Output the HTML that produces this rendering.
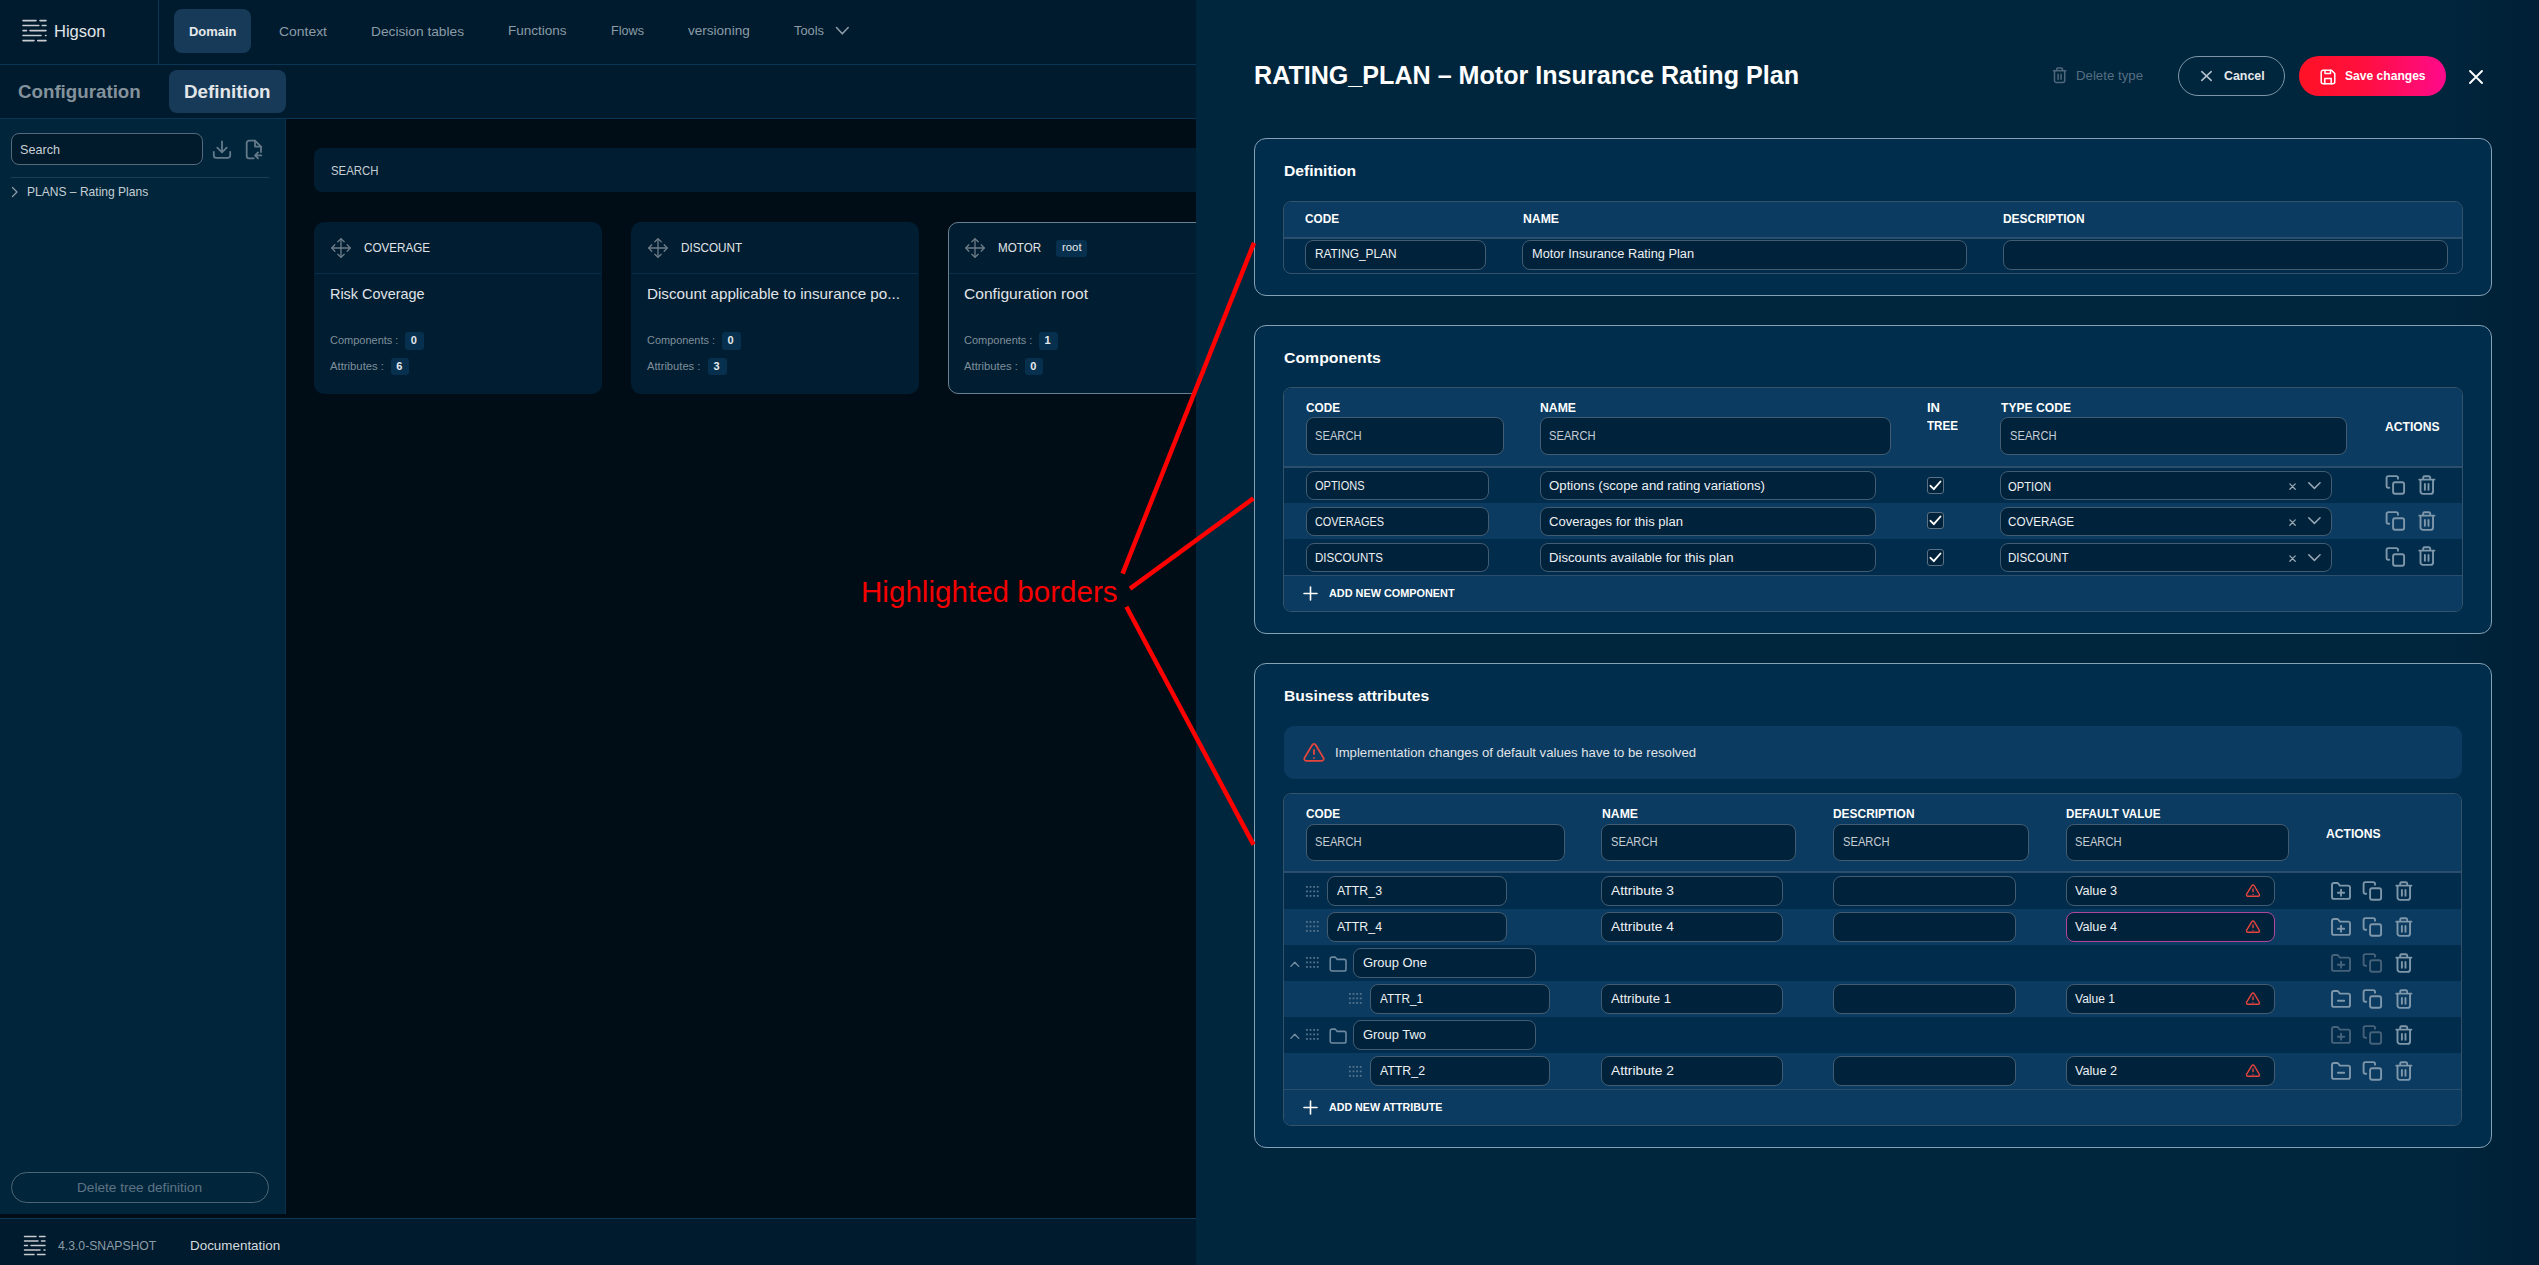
<!DOCTYPE html>
<html><head><meta charset="utf-8"><title>Higson</title>
<style>
html,body{margin:0;padding:0;}
body{width:2539px;height:1265px;overflow:hidden;position:relative;background:#000d17;font-family:"Liberation Sans", sans-serif;}
.a{position:absolute;}
.t{white-space:nowrap;}
svg.a{overflow:visible;}
</style></head><body>
<div class="a" style="left:0px;top:0px;width:1196px;height:1265px;background:#000d17;"></div>
<div class="a" style="left:0px;top:0px;width:1196px;height:64px;background:#001b2e;"></div>
<div class="a" style="left:0px;top:64px;width:1196px;height:1px;background:#0a3656;"></div>
<div class="a" style="left:158px;top:0px;width:1px;height:64px;background:#0a3656;"></div>
<svg class="a" style="left:22px;top:19px;" width="25" height="23" viewBox="0 0 25 23" fill="none" stroke="#c8ccd0" stroke-width="1.6" stroke-linecap="round" stroke-linejoin="round"><path d="M1 1.6H14M18 1.6H24"/><path d="M1 6.5H16.8M20.3 6.5H24"/><path d="M1 11.6H4.5M8 11.6H24"/><path d="M1 16.5H19M23.5 16.5H24"/><path d="M1 21.6H12M15.7 21.6H24"/></svg>
<div class="a t" id="t1" style="left:54.40px;top:24.06px;font-size:16px;line-height:16px;color:#e0e4e8;transform:scaleX(1.0339);transform-origin:0 0;">Higson</div>
<div class="a" style="left:174px;top:9px;width:77px;height:44px;background:#163a57;border-radius:8px;"></div>
<div class="a t" id="t2" style="left:188.50px;top:24.50px;font-size:13px;line-height:13px;color:#e6e9ec;font-weight:700;transform:scaleX(0.9964);transform-origin:0 0;">Domain</div>
<div class="a t" id="t3" style="left:279.40px;top:24.50px;font-size:13px;line-height:13px;color:#8c9ba7;transform:scaleX(1.0711);transform-origin:0 0;">Context</div>
<div class="a t" id="t4" style="left:371.00px;top:24.50px;font-size:13px;line-height:13px;color:#8c9ba7;transform:scaleX(1.0549);transform-origin:0 0;">Decision tables</div>
<div class="a t" id="t5" style="left:508.00px;top:24.30px;font-size:13px;line-height:13px;color:#8c9ba7;transform:scaleX(1.0395);transform-origin:0 0;">Functions</div>
<div class="a t" id="t6" style="left:610.80px;top:24.30px;font-size:13px;line-height:13px;color:#8c9ba7;transform:scaleX(0.9719);transform-origin:0 0;">Flows</div>
<div class="a t" id="t7" style="left:688.00px;top:24.30px;font-size:13px;line-height:13px;color:#8c9ba7;transform:scaleX(1.0411);transform-origin:0 0;">versioning</div>
<div class="a t" id="t8" style="left:794.00px;top:23.80px;font-size:13px;line-height:13px;color:#8c9ba7;transform:scaleX(0.9882);transform-origin:0 0;">Tools</div>
<svg class="a" style="left:835px;top:26px;" width="15" height="10" viewBox="0 0 15 10" fill="none" stroke="#8c9ba7" stroke-width="1.6" stroke-linecap="round" stroke-linejoin="round"><path d="M1.5 1.5L7.3 7.8L13.2 1.5"/></svg>
<div class="a" style="left:0px;top:65px;width:1196px;height:53px;background:#001b2e;"></div>
<div class="a" style="left:0px;top:118px;width:1196px;height:1px;background:#0a3656;"></div>
<div class="a t" id="t9" style="left:17.80px;top:82.42px;font-size:19px;line-height:19px;color:#84929c;font-weight:700;transform:scaleX(0.9853);transform-origin:0 0;">Configuration</div>
<div class="a" style="left:169px;top:70px;width:117px;height:43px;background:#163a57;border-radius:8px;"></div>
<div class="a t" id="t10" style="left:184.40px;top:82.42px;font-size:19px;line-height:19px;color:#e3e6e9;font-weight:700;transform:scaleX(0.9885);transform-origin:0 0;">Definition</div>
<div class="a" style="left:0px;top:119px;width:285px;height:1095px;background:#01263b;"></div>
<div class="a" style="left:285px;top:119px;width:1px;height:1095px;background:#0a3050;"></div>
<div class="a" style="left:11px;top:133px;width:192px;height:32px;background:#011a2c;border:1px solid #55697a;box-sizing:border-box;border-radius:8px;"></div>
<div class="a t" id="t11" style="left:19.90px;top:142.70px;font-size:13px;line-height:13px;color:#c9d0d5;transform:scaleX(0.9708);transform-origin:0 0;">Search</div>
<svg class="a" style="left:212px;top:140px;" width="20" height="20" viewBox="0 0 20 20" fill="none" stroke="#64798a" stroke-width="1.8" stroke-linecap="round" stroke-linejoin="round"><path d="M10 1.5V12.3M5.3 7.7L10 12.3L14.7 7.7M1.8 11.8V15.5A2.3 2.3 0 0 0 4.1 17.8H15.9A2.3 2.3 0 0 0 18.2 15.5V11.8"/></svg>
<svg class="a" style="left:245px;top:139px;" width="18" height="21" viewBox="0 0 18 21" fill="none" stroke="#64798a" stroke-width="1.8" stroke-linecap="round" stroke-linejoin="round"><path d="M8.8 19.3H4A2.3 2.3 0 0 1 1.7 17V3.9A2.3 2.3 0 0 1 4 1.6H10L16 7.6V13.1"/><path d="M10 1.6V7.6H16"/><path d="M16.3 16.4H10.1M13 13.4L10.1 16.4L13 19.4"/></svg>
<div class="a" style="left:11px;top:177px;width:258px;height:1px;background:#1b3d57;"></div>
<svg class="a" style="left:10px;top:186px;" width="10" height="12" viewBox="0 0 10 12" fill="none" stroke="#8d9ba6" stroke-width="1.3" stroke-linecap="round" stroke-linejoin="round"><path d="M2.5 1.5L7 6L2.5 10.5"/></svg>
<div class="a t" id="t12" style="left:27.30px;top:185.10px;font-size:13px;line-height:13px;color:#c6ced4;transform:scaleX(0.9266);transform-origin:0 0;">PLANS – Rating Plans</div>
<div class="a" style="left:11px;top:1172px;width:258px;height:31px;border:1px solid #4d6475;box-sizing:border-box;border-radius:16px;"></div>
<div class="a t" id="t13" style="left:77.40px;top:1181.40px;font-size:13px;line-height:13px;color:#5e7385;transform:scaleX(1.0482);transform-origin:0 0;">Delete tree definition</div>
<div class="a" style="left:0px;top:1218px;width:1196px;height:47px;background:#001b2e;"></div>
<div class="a" style="left:0px;top:1218px;width:1196px;height:1px;background:#0b3a5c;"></div>
<svg class="a" style="left:23px;top:1235px;" width="24" height="22" viewBox="0 0 24 22" fill="none" stroke="#c8ccd0" stroke-width="1.5" stroke-linecap="round" stroke-linejoin="round"><path d="M1.5 1.5H13M16.5 1.5H22"/><path d="M1.5 6H15M18.5 6H22"/><path d="M1.5 10.5H4.5M8 10.5H22"/><path d="M1.5 15H17M21 15H22"/><path d="M1.5 19.5H11M14.5 19.5H22"/></svg>
<div class="a t" id="t14" style="left:57.50px;top:1238.70px;font-size:13px;line-height:13px;color:#8d9ba6;transform:scaleX(0.9383);transform-origin:0 0;">4.3.0-SNAPSHOT</div>
<div class="a t" id="t15" style="left:189.60px;top:1238.70px;font-size:13px;line-height:13px;color:#d5dade;transform:scaleX(1.0314);transform-origin:0 0;">Documentation</div>
<div class="a" style="left:314px;top:148px;width:900px;height:44px;background:#001d31;border-radius:8px;"></div>
<div class="a t" id="t16" style="left:331.00px;top:164.30px;font-size:13px;line-height:13px;color:#c6ced4;transform:scaleX(0.8766);transform-origin:0 0;">SEARCH</div>
<div class="a" style="left:314px;top:222px;width:288px;height:172px;background:#001d31;border-radius:10px;"></div>
<div class="a" style="left:315px;top:273px;width:286px;height:1px;background:#0b2e48;"></div>
<svg class="a" style="left:330.5px;top:238px;" width="20" height="20" viewBox="0 0 20 20" fill="none" stroke="#6d7c88" stroke-width="1.3" stroke-linecap="round" stroke-linejoin="round"><path d="M10 0.8V19.2M0.8 10H19.2"/><path d="M6.8 3.8L10 0.8L13.2 3.8M6.8 16.2L10 19.2L13.2 16.2M3.8 6.8L0.8 10L3.8 13.2M16.2 6.8L19.2 10L16.2 13.2"/></svg>
<div class="a t" id="t17" style="left:364.30px;top:241.30px;font-size:13px;line-height:13px;color:#e0e4e8;transform:scaleX(0.8957);transform-origin:0 0;">COVERAGE</div>
<div class="a t" id="t18" style="left:330.00px;top:285.80px;font-size:15px;line-height:15px;color:#e0e4e8;transform:scaleX(0.9606);transform-origin:0 0;">Risk Coverage</div>
<div class="a t" id="t19" style="left:330.00px;top:335.19px;font-size:11px;line-height:11px;color:#7f8f9b;transform:scaleX(0.9988);transform-origin:0 0;">Components :</div>
<div class="a t" id="t20" style="left:330.00px;top:360.69px;font-size:11px;line-height:11px;color:#7f8f9b;transform:scaleX(1.0270);transform-origin:0 0;">Attributes :</div>
<div class="a" style="left:405.3px;top:332.3px;width:18.5px;height:17.5px;background:#06304d;border-radius:3px;"></div>
<div class="a t" id="t21" style="left:410.80px;top:335.19px;font-size:11px;line-height:11px;color:#e6e9ec;font-weight:700;">0</div>
<div class="a" style="left:390.7px;top:357.5px;width:18.5px;height:17.5px;background:#06304d;border-radius:3px;"></div>
<div class="a t" id="t22" style="left:396.20px;top:360.69px;font-size:11px;line-height:11px;color:#e6e9ec;font-weight:700;">6</div>
<div class="a" style="left:631px;top:222px;width:288px;height:172px;background:#001d31;border-radius:10px;"></div>
<div class="a" style="left:632px;top:273px;width:286px;height:1px;background:#0b2e48;"></div>
<svg class="a" style="left:647.5px;top:238px;" width="20" height="20" viewBox="0 0 20 20" fill="none" stroke="#6d7c88" stroke-width="1.3" stroke-linecap="round" stroke-linejoin="round"><path d="M10 0.8V19.2M0.8 10H19.2"/><path d="M6.8 3.8L10 0.8L13.2 3.8M6.8 16.2L10 19.2L13.2 16.2M3.8 6.8L0.8 10L3.8 13.2M16.2 6.8L19.2 10L16.2 13.2"/></svg>
<div class="a t" id="t23" style="left:681.30px;top:241.30px;font-size:13px;line-height:13px;color:#e0e4e8;transform:scaleX(0.9014);transform-origin:0 0;">DISCOUNT</div>
<div class="a t" id="t24" style="left:647.00px;top:285.80px;font-size:15px;line-height:15px;color:#e0e4e8;transform:scaleX(1.0147);transform-origin:0 0;">Discount applicable to insurance po...</div>
<div class="a t" id="t25" style="left:647.00px;top:335.19px;font-size:11px;line-height:11px;color:#7f8f9b;transform:scaleX(0.9929);transform-origin:0 0;">Components :</div>
<div class="a t" id="t26" style="left:647.00px;top:360.69px;font-size:11px;line-height:11px;color:#7f8f9b;transform:scaleX(1.0156);transform-origin:0 0;">Attributes :</div>
<div class="a" style="left:722.1px;top:332.3px;width:18.5px;height:17.5px;background:#06304d;border-radius:3px;"></div>
<div class="a t" id="t27" style="left:727.60px;top:335.19px;font-size:11px;line-height:11px;color:#e6e9ec;font-weight:700;">0</div>
<div class="a" style="left:708px;top:357.5px;width:18.5px;height:17.5px;background:#06304d;border-radius:3px;"></div>
<div class="a t" id="t28" style="left:713.50px;top:360.69px;font-size:11px;line-height:11px;color:#e6e9ec;font-weight:700;">3</div>
<div class="a" style="left:948px;top:222px;width:300px;height:172px;background:#001d31;border:1px solid #6a7f90;box-sizing:border-box;border-radius:10px;"></div>
<div class="a" style="left:949px;top:273px;width:298px;height:1px;background:#0b2e48;"></div>
<svg class="a" style="left:964.5px;top:238px;" width="20" height="20" viewBox="0 0 20 20" fill="none" stroke="#6d7c88" stroke-width="1.3" stroke-linecap="round" stroke-linejoin="round"><path d="M10 0.8V19.2M0.8 10H19.2"/><path d="M6.8 3.8L10 0.8L13.2 3.8M6.8 16.2L10 19.2L13.2 16.2M3.8 6.8L0.8 10L3.8 13.2M16.2 6.8L19.2 10L16.2 13.2"/></svg>
<div class="a t" id="t29" style="left:998.30px;top:241.30px;font-size:13px;line-height:13px;color:#e0e4e8;transform:scaleX(0.8950);transform-origin:0 0;">MOTOR</div>
<div class="a t" id="t30" style="left:964.00px;top:285.80px;font-size:15px;line-height:15px;color:#e0e4e8;transform:scaleX(1.0398);transform-origin:0 0;">Configuration root</div>
<div class="a t" id="t31" style="left:964.00px;top:335.19px;font-size:11px;line-height:11px;color:#7f8f9b;transform:scaleX(0.9988);transform-origin:0 0;">Components :</div>
<div class="a t" id="t32" style="left:964.00px;top:360.69px;font-size:11px;line-height:11px;color:#7f8f9b;transform:scaleX(1.0232);transform-origin:0 0;">Attributes :</div>
<div class="a" style="left:1039px;top:332.3px;width:18.5px;height:17.5px;background:#06304d;border-radius:3px;"></div>
<div class="a t" id="t33" style="left:1044.50px;top:335.19px;font-size:11px;line-height:11px;color:#e6e9ec;font-weight:700;">1</div>
<div class="a" style="left:1024.8px;top:357.5px;width:18.5px;height:17.5px;background:#06304d;border-radius:3px;"></div>
<div class="a t" id="t34" style="left:1030.30px;top:360.69px;font-size:11px;line-height:11px;color:#e6e9ec;font-weight:700;">0</div>
<div class="a" style="left:1056px;top:239.6px;width:31px;height:17.5px;background:#06304d;border-radius:3px;"></div>
<div class="a t" id="t35" style="left:1062.00px;top:242.29px;font-size:11px;line-height:11px;color:#e6e9ec;transform:scaleX(1.0333);transform-origin:0 0;">root</div>
<div class="a" style="left:1196px;top:0;width:1343px;height:1265px;background:linear-gradient(90deg,#00263d 0px,#00263d 1240px,#001f36 1343px);"></div>
<div class="a t" id="t36" style="left:1254.00px;top:62.84px;font-size:25px;line-height:25px;color:#ffffff;font-weight:700;transform:scaleX(1.0043);transform-origin:0 0;">RATING_PLAN – Motor Insurance Rating Plan</div>
<svg class="a" style="left:2050px;top:63.3px;" width="19.6" height="19.6" viewBox="0 0 24 24" fill="none" stroke="#4f677b" stroke-width="1.84" stroke-linecap="round" stroke-linejoin="round"><path d="M4.25 9.6H19.45M8.2 9.6V7.6A1.4 1.4 0 0 1 9.6 6.2H13.8A1.4 1.4 0 0 1 15.2 7.6V9.6M5.5 9.6V21.5A2.4 2.4 0 0 0 7.9 23.9H15.65A2.4 2.4 0 0 0 18.05 21.5V9.6M9.9 13.9V19.8M13.5 13.9V19.8"/></svg>
<div class="a t" id="t37" style="left:2076.20px;top:69.40px;font-size:13px;line-height:13px;color:#566e82;transform:scaleX(1.0188);transform-origin:0 0;">Delete type</div>
<div class="a" style="left:2178px;top:56px;width:107px;height:40px;border:1.5px solid #7f96a8;box-sizing:border-box;border-radius:20px;"></div>
<svg class="a" style="left:2200px;top:70.3px;" width="13" height="13" viewBox="0 0 13 13" fill="none" stroke="#b7c3cc" stroke-width="1.5" stroke-linecap="round" stroke-linejoin="round"><path d="M1.8 1.6L11.2 10.4M11.2 1.6L1.8 10.4"/></svg>
<div class="a t" id="t38" style="left:2223.90px;top:69.40px;font-size:13px;line-height:13px;color:#e6e9ec;font-weight:700;transform:scaleX(0.9545);transform-origin:0 0;">Cancel</div>
<div class="a" style="left:2299px;top:56px;width:147px;height:40px;border-radius:20px;background:linear-gradient(90deg,#ff1225 0%,#ff0f3f 45%,#ff0a8c 100%);"></div>
<svg class="a" style="left:2320px;top:69px;" width="16" height="16" viewBox="0 0 16 16" fill="none" stroke="#ffffff" stroke-width="1.5" stroke-linecap="round" stroke-linejoin="round"><path d="M3 1.2H11.5L14.8 4.5V12.8A2 2 0 0 1 12.8 14.8H3.2A2 2 0 0 1 1.2 12.8V3.2A2 2 0 0 1 3.2 1.2Z"/><path d="M4.8 14.8V9.5H11.2V14.8M5 1.2V4.5H10.5V1.2"/></svg>
<div class="a t" id="t39" style="left:2344.90px;top:69.40px;font-size:13px;line-height:13px;color:#ffffff;font-weight:700;transform:scaleX(0.9294);transform-origin:0 0;">Save changes</div>
<svg class="a" style="left:2468px;top:69px;" width="16" height="16" viewBox="0 0 16 16" fill="none" stroke="#ffffff" stroke-width="1.9" stroke-linecap="round" stroke-linejoin="round"><path d="M2 2L14 14M14 2L2 14"/></svg>
<div class="a" style="left:1254px;top:138px;width:1238px;height:158px;background:#002d4c;border:1.5px solid #86a0b4;box-sizing:border-box;border-radius:12px;"></div>
<div class="a t" id="t40" style="left:1283.90px;top:162.70px;font-size:15px;line-height:15px;color:#ffffff;font-weight:700;transform:scaleX(1.0426);transform-origin:0 0;">Definition</div>
<div class="a" style="left:1283px;top:200.5px;width:1180px;height:73.5px;border:1px solid #34536b;border-radius:8px;box-sizing:border-box;overflow:hidden;background:#012c4c;"><div style="position:absolute;left:0;top:0;width:100%;height:35.5px;background:#0b3b60;"></div><div style="position:absolute;left:0;top:35.5px;width:100%;height:1.5px;background:#2a4e6c;"></div></div>
<div class="a t" id="t41" style="left:1305.20px;top:212.92px;font-size:12.5px;line-height:12.5px;color:#ffffff;font-weight:700;transform:scaleX(0.9412);transform-origin:0 0;">CODE</div>
<div class="a t" id="t42" style="left:1522.60px;top:212.92px;font-size:12.5px;line-height:12.5px;color:#ffffff;font-weight:700;transform:scaleX(0.9779);transform-origin:0 0;">NAME</div>
<div class="a t" id="t43" style="left:2003.20px;top:212.92px;font-size:12.5px;line-height:12.5px;color:#ffffff;font-weight:700;transform:scaleX(0.9539);transform-origin:0 0;">DESCRIPTION</div>
<div class="a" style="left:1305px;top:240.3px;width:181px;height:29.4px;background:#01223b;border:1px solid #425d72;box-sizing:border-box;border-radius:8px;"></div>
<div class="a t" id="t44" style="left:1314.50px;top:248.12px;font-size:12.5px;line-height:12.5px;color:#eef1f3;transform:scaleX(0.9487);transform-origin:0 0;">RATING_PLAN</div>
<div class="a" style="left:1522px;top:240.3px;width:444.6px;height:29.4px;background:#01223b;border:1px solid #425d72;box-sizing:border-box;border-radius:8px;"></div>
<div class="a t" id="t45" style="left:1531.50px;top:248.12px;font-size:12.5px;line-height:12.5px;color:#eef1f3;transform:scaleX(1.0226);transform-origin:0 0;">Motor Insurance Rating Plan</div>
<div class="a" style="left:2003px;top:240.3px;width:445px;height:29.4px;background:#01223b;border:1px solid #425d72;box-sizing:border-box;border-radius:8px;"></div>
<div class="a" style="left:1254px;top:325px;width:1238px;height:309px;background:#002d4c;border:1.5px solid #86a0b4;box-sizing:border-box;border-radius:12px;"></div>
<div class="a t" id="t46" style="left:1283.90px;top:349.50px;font-size:15px;line-height:15px;color:#ffffff;font-weight:700;transform:scaleX(1.0559);transform-origin:0 0;">Components</div>
<div class="a" style="left:1283px;top:387px;width:1180px;height:225px;border:1px solid #34536b;border-radius:8px;box-sizing:border-box;overflow:hidden;background:#012c4c;"><div style="position:absolute;left:0;top:0;width:100%;height:78px;background:#0b3b60;"></div><div style="position:absolute;left:0;top:78px;width:100%;height:2px;background:#2a4e6c;"></div><div style="position:absolute;left:0;top:79.6px;width:100%;height:35.4px;background:#012c4c;"></div><div style="position:absolute;left:0;top:115.0px;width:100%;height:36.3px;background:#0b3b60;"></div><div style="position:absolute;left:0;top:151.3px;width:100%;height:35.1px;background:#012c4c;"></div><div style="position:absolute;left:0;top:187.0px;width:100%;height:1px;background:#2a4e6c;"></div><div style="position:absolute;left:0;top:188.0px;width:100%;height:40px;background:#0b3b60;"></div></div>
<div class="a t" id="t47" style="left:1305.70px;top:401.62px;font-size:12.5px;line-height:12.5px;color:#ffffff;font-weight:700;transform:scaleX(0.9412);transform-origin:0 0;">CODE</div>
<div class="a t" id="t48" style="left:1539.80px;top:401.62px;font-size:12.5px;line-height:12.5px;color:#ffffff;font-weight:700;transform:scaleX(0.9779);transform-origin:0 0;">NAME</div>
<div class="a t" id="t49" style="left:1926.80px;top:401.62px;font-size:12.5px;line-height:12.5px;color:#ffffff;font-weight:700;transform:scaleX(1.0400);transform-origin:0 0;">IN</div>
<div class="a t" id="t50" style="left:1926.80px;top:420.22px;font-size:12.5px;line-height:12.5px;color:#ffffff;font-weight:700;transform:scaleX(0.9297);transform-origin:0 0;">TREE</div>
<div class="a t" id="t51" style="left:2001.20px;top:401.62px;font-size:12.5px;line-height:12.5px;color:#ffffff;font-weight:700;transform:scaleX(0.9689);transform-origin:0 0;">TYPE CODE</div>
<div class="a t" id="t52" style="left:2384.50px;top:421.02px;font-size:12.5px;line-height:12.5px;color:#ffffff;font-weight:700;transform:scaleX(0.9689);transform-origin:0 0;">ACTIONS</div>
<div class="a" style="left:1305.5px;top:417.4px;width:198px;height:38px;background:#01223b;border:1px solid #425d72;box-sizing:border-box;border-radius:8px;"></div>
<div class="a t" id="t53" style="left:1315.00px;top:429.72px;font-size:12.5px;line-height:12.5px;color:#c6ced4;transform:scaleX(0.8926);transform-origin:0 0;">SEARCH</div>
<div class="a" style="left:1539.5px;top:417.4px;width:351.3px;height:38px;background:#01223b;border:1px solid #425d72;box-sizing:border-box;border-radius:8px;"></div>
<div class="a t" id="t54" style="left:1549.00px;top:429.72px;font-size:12.5px;line-height:12.5px;color:#c6ced4;transform:scaleX(0.8926);transform-origin:0 0;">SEARCH</div>
<div class="a" style="left:2000px;top:417.4px;width:346.8px;height:38px;background:#01223b;border:1px solid #425d72;box-sizing:border-box;border-radius:8px;"></div>
<div class="a t" id="t55" style="left:2009.50px;top:429.72px;font-size:12.5px;line-height:12.5px;color:#c6ced4;transform:scaleX(0.8926);transform-origin:0 0;">SEARCH</div>
<div class="a" style="left:1305.5px;top:471.1px;width:183.4px;height:29.2px;background:#01223b;border:1px solid #425d72;box-sizing:border-box;border-radius:8px;"></div>
<div class="a t" id="t56" style="left:1315.00px;top:480.12px;font-size:12.5px;line-height:12.5px;color:#eef1f3;transform:scaleX(0.8798);transform-origin:0 0;">OPTIONS</div>
<div class="a" style="left:1539.5px;top:471.1px;width:336.3px;height:29.2px;background:#01223b;border:1px solid #425d72;box-sizing:border-box;border-radius:8px;"></div>
<div class="a t" id="t57" style="left:1549.00px;top:480.12px;font-size:12.5px;line-height:12.5px;color:#eef1f3;transform:scaleX(1.0574);transform-origin:0 0;">Options (scope and rating variations)</div>
<div class="a" style="left:2000px;top:471.1px;width:331.9px;height:29.2px;background:#01223b;border:1px solid #425d72;box-sizing:border-box;border-radius:8px;"></div>
<div class="a t" id="t58" style="left:2007.90px;top:480.52px;font-size:12.5px;line-height:12.5px;color:#eef1f3;transform:scaleX(0.8973);transform-origin:0 0;">OPTION</div>
<svg class="a" style="left:2289px;top:483.3px;" width="8" height="8" viewBox="0 0 8 8" fill="none" stroke="#98a8b4" stroke-width="1.3" stroke-linecap="round" stroke-linejoin="round"><path d="M0.85 0.85L6.25 6.25M6.25 0.85L0.85 6.25"/></svg>
<svg class="a" style="left:2308px;top:481.90000000000003px;" width="14" height="8" viewBox="0 0 14 8" fill="none" stroke="#98a8b4" stroke-width="1.5" stroke-linecap="round" stroke-linejoin="round"><path d="M0.75 0.75L6.4 6.35L12.05 0.75"/></svg>
<div class="a" style="left:1927px;top:476.90000000000003px;width:17px;height:17px;background:#01223b;border:1px solid #5b7184;box-sizing:border-box;border-radius:3px;"></div>
<svg class="a" style="left:1927px;top:476.90000000000003px;" width="17" height="17" viewBox="0 0 17 17" fill="none" stroke="#ffffff" stroke-width="1.9" stroke-linecap="round" stroke-linejoin="round"><path d="M3.5 8.8L6.8 12.2L13.5 4.5"/></svg>
<svg class="a" style="left:2381.3px;top:470.1px;" width="24" height="24" viewBox="0 0 24 24" fill="none" stroke="#7f97aa" stroke-width="1.9" stroke-linecap="round" stroke-linejoin="round"><path d="M8.2 17.7H7.4A1.8 1.8 0 0 1 5.6 15.9V7.9A1.8 1.8 0 0 1 7.4 6.1H15.2A1.8 1.8 0 0 1 17 7.9V8.8"/><path d="M14.1 12.3H21.1A2 2 0 0 1 23.1 14.3V21.8A2 2 0 0 1 21.1 23.8H14.1A2 2 0 0 1 12.1 21.8V14.3A2 2 0 0 1 14.1 12.3Z"/></svg>
<svg class="a" style="left:2414.7px;top:469.90000000000003px;" width="24" height="24" viewBox="0 0 24 24" fill="none" stroke="#7f97aa" stroke-width="1.9" stroke-linecap="round" stroke-linejoin="round"><path d="M4.25 9.6H19.45M8.2 9.6V7.6A1.4 1.4 0 0 1 9.6 6.2H13.8A1.4 1.4 0 0 1 15.2 7.6V9.6M5.5 9.6V21.5A2.4 2.4 0 0 0 7.9 23.9H15.65A2.4 2.4 0 0 0 18.05 21.5V9.6M9.9 13.9V19.8M13.5 13.9V19.8"/></svg>
<div class="a" style="left:1305.5px;top:506.5px;width:183.4px;height:29.2px;background:#01223b;border:1px solid #425d72;box-sizing:border-box;border-radius:8px;"></div>
<div class="a t" id="t59" style="left:1315.00px;top:515.52px;font-size:12.5px;line-height:12.5px;color:#eef1f3;transform:scaleX(0.8713);transform-origin:0 0;">COVERAGES</div>
<div class="a" style="left:1539.5px;top:506.5px;width:336.3px;height:29.2px;background:#01223b;border:1px solid #425d72;box-sizing:border-box;border-radius:8px;"></div>
<div class="a t" id="t60" style="left:1549.00px;top:515.52px;font-size:12.5px;line-height:12.5px;color:#eef1f3;transform:scaleX(1.0424);transform-origin:0 0;">Coverages for this plan</div>
<div class="a" style="left:2000px;top:506.5px;width:331.9px;height:29.2px;background:#01223b;border:1px solid #425d72;box-sizing:border-box;border-radius:8px;"></div>
<div class="a t" id="t61" style="left:2007.90px;top:515.92px;font-size:12.5px;line-height:12.5px;color:#eef1f3;transform:scaleX(0.9314);transform-origin:0 0;">COVERAGE</div>
<svg class="a" style="left:2289px;top:518.7px;" width="8" height="8" viewBox="0 0 8 8" fill="none" stroke="#98a8b4" stroke-width="1.3" stroke-linecap="round" stroke-linejoin="round"><path d="M0.85 0.85L6.25 6.25M6.25 0.85L0.85 6.25"/></svg>
<svg class="a" style="left:2308px;top:517.3px;" width="14" height="8" viewBox="0 0 14 8" fill="none" stroke="#98a8b4" stroke-width="1.5" stroke-linecap="round" stroke-linejoin="round"><path d="M0.75 0.75L6.4 6.35L12.05 0.75"/></svg>
<div class="a" style="left:1927px;top:512.3px;width:17px;height:17px;background:#01223b;border:1px solid #5b7184;box-sizing:border-box;border-radius:3px;"></div>
<svg class="a" style="left:1927px;top:512.3px;" width="17" height="17" viewBox="0 0 17 17" fill="none" stroke="#ffffff" stroke-width="1.9" stroke-linecap="round" stroke-linejoin="round"><path d="M3.5 8.8L6.8 12.2L13.5 4.5"/></svg>
<svg class="a" style="left:2381.3px;top:505.95px;" width="24" height="24" viewBox="0 0 24 24" fill="none" stroke="#7f97aa" stroke-width="1.9" stroke-linecap="round" stroke-linejoin="round"><path d="M8.2 17.7H7.4A1.8 1.8 0 0 1 5.6 15.9V7.9A1.8 1.8 0 0 1 7.4 6.1H15.2A1.8 1.8 0 0 1 17 7.9V8.8"/><path d="M14.1 12.3H21.1A2 2 0 0 1 23.1 14.3V21.8A2 2 0 0 1 21.1 23.8H14.1A2 2 0 0 1 12.1 21.8V14.3A2 2 0 0 1 14.1 12.3Z"/></svg>
<svg class="a" style="left:2414.7px;top:505.75px;" width="24" height="24" viewBox="0 0 24 24" fill="none" stroke="#7f97aa" stroke-width="1.9" stroke-linecap="round" stroke-linejoin="round"><path d="M4.25 9.6H19.45M8.2 9.6V7.6A1.4 1.4 0 0 1 9.6 6.2H13.8A1.4 1.4 0 0 1 15.2 7.6V9.6M5.5 9.6V21.5A2.4 2.4 0 0 0 7.9 23.9H15.65A2.4 2.4 0 0 0 18.05 21.5V9.6M9.9 13.9V19.8M13.5 13.9V19.8"/></svg>
<div class="a" style="left:1305.5px;top:542.8px;width:183.4px;height:29.2px;background:#01223b;border:1px solid #425d72;box-sizing:border-box;border-radius:8px;"></div>
<div class="a t" id="t62" style="left:1315.00px;top:551.82px;font-size:12.5px;line-height:12.5px;color:#eef1f3;transform:scaleX(0.9236);transform-origin:0 0;">DISCOUNTS</div>
<div class="a" style="left:1539.5px;top:542.8px;width:336.3px;height:29.2px;background:#01223b;border:1px solid #425d72;box-sizing:border-box;border-radius:8px;"></div>
<div class="a t" id="t63" style="left:1549.00px;top:551.82px;font-size:12.5px;line-height:12.5px;color:#eef1f3;transform:scaleX(1.0495);transform-origin:0 0;">Discounts available for this plan</div>
<div class="a" style="left:2000px;top:542.8px;width:331.9px;height:29.2px;background:#01223b;border:1px solid #425d72;box-sizing:border-box;border-radius:8px;"></div>
<div class="a t" id="t64" style="left:2007.90px;top:552.22px;font-size:12.5px;line-height:12.5px;color:#eef1f3;transform:scaleX(0.9268);transform-origin:0 0;">DISCOUNT</div>
<svg class="a" style="left:2289px;top:555.0px;" width="8" height="8" viewBox="0 0 8 8" fill="none" stroke="#98a8b4" stroke-width="1.3" stroke-linecap="round" stroke-linejoin="round"><path d="M0.85 0.85L6.25 6.25M6.25 0.85L0.85 6.25"/></svg>
<svg class="a" style="left:2308px;top:553.5999999999999px;" width="14" height="8" viewBox="0 0 14 8" fill="none" stroke="#98a8b4" stroke-width="1.5" stroke-linecap="round" stroke-linejoin="round"><path d="M0.75 0.75L6.4 6.35L12.05 0.75"/></svg>
<div class="a" style="left:1927px;top:548.5999999999999px;width:17px;height:17px;background:#01223b;border:1px solid #5b7184;box-sizing:border-box;border-radius:3px;"></div>
<svg class="a" style="left:1927px;top:548.5999999999999px;" width="17" height="17" viewBox="0 0 17 17" fill="none" stroke="#ffffff" stroke-width="1.9" stroke-linecap="round" stroke-linejoin="round"><path d="M3.5 8.8L6.8 12.2L13.5 4.5"/></svg>
<svg class="a" style="left:2381.3px;top:541.6499999999999px;" width="24" height="24" viewBox="0 0 24 24" fill="none" stroke="#7f97aa" stroke-width="1.9" stroke-linecap="round" stroke-linejoin="round"><path d="M8.2 17.7H7.4A1.8 1.8 0 0 1 5.6 15.9V7.9A1.8 1.8 0 0 1 7.4 6.1H15.2A1.8 1.8 0 0 1 17 7.9V8.8"/><path d="M14.1 12.3H21.1A2 2 0 0 1 23.1 14.3V21.8A2 2 0 0 1 21.1 23.8H14.1A2 2 0 0 1 12.1 21.8V14.3A2 2 0 0 1 14.1 12.3Z"/></svg>
<svg class="a" style="left:2414.7px;top:541.4499999999999px;" width="24" height="24" viewBox="0 0 24 24" fill="none" stroke="#7f97aa" stroke-width="1.9" stroke-linecap="round" stroke-linejoin="round"><path d="M4.25 9.6H19.45M8.2 9.6V7.6A1.4 1.4 0 0 1 9.6 6.2H13.8A1.4 1.4 0 0 1 15.2 7.6V9.6M5.5 9.6V21.5A2.4 2.4 0 0 0 7.9 23.9H15.65A2.4 2.4 0 0 0 18.05 21.5V9.6M9.9 13.9V19.8M13.5 13.9V19.8"/></svg>
<svg class="a" style="left:1302.5px;top:585.7px;" width="15" height="15" viewBox="0 0 15 15" fill="none" stroke="#ffffff" stroke-width="1.6" stroke-linecap="round" stroke-linejoin="round"><path d="M7.5 1V14M1 7.5H14"/></svg>
<div class="a t" id="t65" style="left:1328.80px;top:587.89px;font-size:11px;line-height:11px;color:#ffffff;font-weight:700;transform:scaleX(0.9881);transform-origin:0 0;">ADD NEW COMPONENT</div>
<div class="a" style="left:1254px;top:663px;width:1238px;height:484.5px;background:#002d4c;border:1.5px solid #86a0b4;box-sizing:border-box;border-radius:12px;"></div>
<div class="a t" id="t66" style="left:1283.90px;top:688.10px;font-size:15px;line-height:15px;color:#ffffff;font-weight:700;transform:scaleX(1.0430);transform-origin:0 0;">Business attributes</div>
<div class="a" style="left:1283.7px;top:726.4px;width:1178.7px;height:52.8px;background:#0b3b60;border-radius:10px;"></div>
<svg class="a" style="left:1301.7px;top:741px;" width="24" height="24" viewBox="0 0 24 24" fill="none" stroke="#e5453d" stroke-width="1.8" stroke-linecap="round" stroke-linejoin="round"><path d="M12 9V13M12 17H12.01"/><path d="M10.24 3.957L2.518 16.85A1.989 1.989 0 0 0 4.22 19.83H19.76A1.989 1.989 0 0 0 21.46 16.85L13.74 3.957A1.989 1.989 0 0 0 10.24 3.957Z"/></svg>
<div class="a t" id="t67" style="left:1334.50px;top:746.20px;font-size:13px;line-height:13px;color:#e0e4e8;transform:scaleX(1.0112);transform-origin:0 0;">Implementation changes of default values have to be resolved</div>
<div class="a" style="left:1283px;top:793.4px;width:1179.4px;height:332.4px;border:1px solid #34536b;border-radius:8px;box-sizing:border-box;overflow:hidden;background:#012c4c;"><div style="position:absolute;left:0;top:0;width:100%;height:76.6px;background:#0b3b60;"></div><div style="position:absolute;left:0;top:76.6px;width:100%;height:2px;background:#2a4e6c;"></div><div style="position:absolute;left:0;top:78.7px;width:100%;height:36.0px;background:#012c4c;"></div><div style="position:absolute;left:0;top:114.7px;width:100%;height:35.8px;background:#0b3b60;"></div><div style="position:absolute;left:0;top:150.5px;width:100%;height:36.1px;background:#012c4c;"></div><div style="position:absolute;left:0;top:186.6px;width:100%;height:36.0px;background:#0b3b60;"></div><div style="position:absolute;left:0;top:222.6px;width:100%;height:35.9px;background:#012c4c;"></div><div style="position:absolute;left:0;top:258.5px;width:100%;height:36.4px;background:#0b3b60;"></div><div style="position:absolute;left:0;top:294.6px;width:100%;height:1px;background:#2a4e6c;"></div><div style="position:absolute;left:0;top:295.6px;width:100%;height:40px;background:#0b3b60;"></div></div>
<div class="a t" id="t68" style="left:1305.50px;top:807.72px;font-size:12.5px;line-height:12.5px;color:#ffffff;font-weight:700;transform:scaleX(0.9412);transform-origin:0 0;">CODE</div>
<div class="a t" id="t69" style="left:1601.70px;top:807.72px;font-size:12.5px;line-height:12.5px;color:#ffffff;font-weight:700;transform:scaleX(0.9779);transform-origin:0 0;">NAME</div>
<div class="a t" id="t70" style="left:1833.20px;top:807.72px;font-size:12.5px;line-height:12.5px;color:#ffffff;font-weight:700;transform:scaleX(0.9539);transform-origin:0 0;">DESCRIPTION</div>
<div class="a t" id="t71" style="left:2066.10px;top:807.72px;font-size:12.5px;line-height:12.5px;color:#ffffff;font-weight:700;transform:scaleX(0.9299);transform-origin:0 0;">DEFAULT VALUE</div>
<div class="a t" id="t72" style="left:2325.70px;top:828.02px;font-size:12.5px;line-height:12.5px;color:#ffffff;font-weight:700;transform:scaleX(0.9689);transform-origin:0 0;">ACTIONS</div>
<div class="a" style="left:1305.5px;top:823.5px;width:259.8px;height:37.7px;background:#01223b;border:1px solid #425d72;box-sizing:border-box;border-radius:8px;"></div>
<div class="a t" id="t73" style="left:1315.00px;top:836.32px;font-size:12.5px;line-height:12.5px;color:#c6ced4;transform:scaleX(0.8926);transform-origin:0 0;">SEARCH</div>
<div class="a" style="left:1601.3px;top:823.5px;width:195.1px;height:37.7px;background:#01223b;border:1px solid #425d72;box-sizing:border-box;border-radius:8px;"></div>
<div class="a t" id="t74" style="left:1610.80px;top:836.32px;font-size:12.5px;line-height:12.5px;color:#c6ced4;transform:scaleX(0.8926);transform-origin:0 0;">SEARCH</div>
<div class="a" style="left:1833.2px;top:823.5px;width:195.9px;height:37.7px;background:#01223b;border:1px solid #425d72;box-sizing:border-box;border-radius:8px;"></div>
<div class="a t" id="t75" style="left:1842.70px;top:836.32px;font-size:12.5px;line-height:12.5px;color:#c6ced4;transform:scaleX(0.8926);transform-origin:0 0;">SEARCH</div>
<div class="a" style="left:2065.5px;top:823.5px;width:223.2px;height:37.7px;background:#01223b;border:1px solid #425d72;box-sizing:border-box;border-radius:8px;"></div>
<div class="a t" id="t76" style="left:2075.00px;top:836.32px;font-size:12.5px;line-height:12.5px;color:#c6ced4;transform:scaleX(0.8926);transform-origin:0 0;">SEARCH</div>
<svg class="a" style="left:1306.0px;top:885.5px" width="14" height="12" viewBox="0 0 14 12" fill="#54728a" stroke="none"><rect x="0.0" y="0.0" width="1.8" height="1.8"/><rect x="0.0" y="4.5" width="1.8" height="1.8"/><rect x="0.0" y="9.0" width="1.8" height="1.8"/><rect x="3.6" y="0.0" width="1.8" height="1.8"/><rect x="3.6" y="4.5" width="1.8" height="1.8"/><rect x="3.6" y="9.0" width="1.8" height="1.8"/><rect x="7.2" y="0.0" width="1.8" height="1.8"/><rect x="7.2" y="4.5" width="1.8" height="1.8"/><rect x="7.2" y="9.0" width="1.8" height="1.8"/><rect x="10.8" y="0.0" width="1.8" height="1.8"/><rect x="10.8" y="4.5" width="1.8" height="1.8"/><rect x="10.8" y="9.0" width="1.8" height="1.8"/></svg>
<div class="a" style="left:1327px;top:876.3px;width:180.4px;height:30.2px;background:#01223b;border:1px solid #425d72;box-sizing:border-box;border-radius:8px;"></div>
<div class="a t" id="t77" style="left:1336.50px;top:885.12px;font-size:12.5px;line-height:12.5px;color:#eef1f3;transform:scaleX(0.9863);transform-origin:0 0;">ATTR_3</div>
<div class="a" style="left:1601.3px;top:876.3px;width:181.4px;height:30.2px;background:#01223b;border:1px solid #425d72;box-sizing:border-box;border-radius:8px;"></div>
<div class="a t" id="t78" style="left:1610.80px;top:885.12px;font-size:12.5px;line-height:12.5px;color:#eef1f3;transform:scaleX(1.1038);transform-origin:0 0;">Attribute 3</div>
<div class="a" style="left:1833.2px;top:876.3px;width:182.4px;height:30.2px;background:#01223b;border:1px solid #425d72;box-sizing:border-box;border-radius:8px;"></div>
<div class="a" style="left:2065.5px;top:876.3px;width:209.1px;height:30.2px;background:#01223b;border:1px solid #425d72;box-sizing:border-box;border-radius:8px;"></div>
<div class="a t" id="t79" style="left:2075.00px;top:885.12px;font-size:12.5px;line-height:12.5px;color:#eef1f3;transform:scaleX(1.0128);transform-origin:0 0;">Value 3</div>
<svg class="a" style="left:2245px;top:882.9px;" width="16" height="16" viewBox="0 0 24 24" fill="none" stroke="#e5453d" stroke-width="2.1" stroke-linecap="round" stroke-linejoin="round"><path d="M12 9V13M12 17H12.01"/><path d="M10.24 3.957L2.518 16.85A1.989 1.989 0 0 0 4.22 19.83H19.76A1.989 1.989 0 0 0 21.46 16.85L13.74 3.957A1.989 1.989 0 0 0 10.24 3.957Z"/></svg>
<svg class="a" style="left:2326px;top:876.0999999999999px;" width="24" height="24" viewBox="0 0 24 24" fill="none" stroke="#7f97aa" stroke-width="1.9" stroke-linecap="round" stroke-linejoin="round"><path d="M8 7H11.8L13.9 9.6H22A2 2 0 0 1 24 11.6V20.9A2 2 0 0 1 22 22.9H8A2 2 0 0 1 6 20.9V9A2 2 0 0 1 8 7Z"/><path d="M15.05 13.6V19.8M11.9 16.7H18.2"/></svg>
<svg class="a" style="left:2358px;top:876.0px;" width="24" height="24" viewBox="0 0 24 24" fill="none" stroke="#7f97aa" stroke-width="1.9" stroke-linecap="round" stroke-linejoin="round"><path d="M8.2 17.7H7.4A1.8 1.8 0 0 1 5.6 15.9V7.9A1.8 1.8 0 0 1 7.4 6.1H15.2A1.8 1.8 0 0 1 17 7.9V8.8"/><path d="M14.1 12.3H21.1A2 2 0 0 1 23.1 14.3V21.8A2 2 0 0 1 21.1 23.8H14.1A2 2 0 0 1 12.1 21.8V14.3A2 2 0 0 1 14.1 12.3Z"/></svg>
<svg class="a" style="left:2392px;top:876.0px;" width="24" height="24" viewBox="0 0 24 24" fill="none" stroke="#7f97aa" stroke-width="1.9" stroke-linecap="round" stroke-linejoin="round"><path d="M4.25 9.6H19.45M8.2 9.6V7.6A1.4 1.4 0 0 1 9.6 6.2H13.8A1.4 1.4 0 0 1 15.2 7.6V9.6M5.5 9.6V21.5A2.4 2.4 0 0 0 7.9 23.9H15.65A2.4 2.4 0 0 0 18.05 21.5V9.6M9.9 13.9V19.8M13.5 13.9V19.8"/></svg>
<svg class="a" style="left:1306.0px;top:921.4px" width="14" height="12" viewBox="0 0 14 12" fill="#54728a" stroke="none"><rect x="0.0" y="0.0" width="1.8" height="1.8"/><rect x="0.0" y="4.5" width="1.8" height="1.8"/><rect x="0.0" y="9.0" width="1.8" height="1.8"/><rect x="3.6" y="0.0" width="1.8" height="1.8"/><rect x="3.6" y="4.5" width="1.8" height="1.8"/><rect x="3.6" y="9.0" width="1.8" height="1.8"/><rect x="7.2" y="0.0" width="1.8" height="1.8"/><rect x="7.2" y="4.5" width="1.8" height="1.8"/><rect x="7.2" y="9.0" width="1.8" height="1.8"/><rect x="10.8" y="0.0" width="1.8" height="1.8"/><rect x="10.8" y="4.5" width="1.8" height="1.8"/><rect x="10.8" y="9.0" width="1.8" height="1.8"/></svg>
<div class="a" style="left:1327px;top:912.3px;width:180.4px;height:30.2px;background:#01223b;border:1px solid #425d72;box-sizing:border-box;border-radius:8px;"></div>
<div class="a t" id="t80" style="left:1336.50px;top:921.12px;font-size:12.5px;line-height:12.5px;color:#eef1f3;transform:scaleX(0.9863);transform-origin:0 0;">ATTR_4</div>
<div class="a" style="left:1601.3px;top:912.3px;width:181.4px;height:30.2px;background:#01223b;border:1px solid #425d72;box-sizing:border-box;border-radius:8px;"></div>
<div class="a t" id="t81" style="left:1610.80px;top:921.12px;font-size:12.5px;line-height:12.5px;color:#eef1f3;transform:scaleX(1.1038);transform-origin:0 0;">Attribute 4</div>
<div class="a" style="left:1833.2px;top:912.3px;width:182.4px;height:30.2px;background:#01223b;border:1px solid #425d72;box-sizing:border-box;border-radius:8px;"></div>
<div class="a" style="left:2065.5px;top:912.3px;width:209.1px;height:30.2px;background:#01223b;border:1px solid #b0479c;box-sizing:border-box;border-radius:8px;"></div>
<div class="a t" id="t82" style="left:2075.00px;top:921.12px;font-size:12.5px;line-height:12.5px;color:#eef1f3;transform:scaleX(1.0128);transform-origin:0 0;">Value 4</div>
<svg class="a" style="left:2245px;top:918.9px;" width="16" height="16" viewBox="0 0 24 24" fill="none" stroke="#e5453d" stroke-width="2.1" stroke-linecap="round" stroke-linejoin="round"><path d="M12 9V13M12 17H12.01"/><path d="M10.24 3.957L2.518 16.85A1.989 1.989 0 0 0 4.22 19.83H19.76A1.989 1.989 0 0 0 21.46 16.85L13.74 3.957A1.989 1.989 0 0 0 10.24 3.957Z"/></svg>
<svg class="a" style="left:2326px;top:912.0px;" width="24" height="24" viewBox="0 0 24 24" fill="none" stroke="#7f97aa" stroke-width="1.9" stroke-linecap="round" stroke-linejoin="round"><path d="M8 7H11.8L13.9 9.6H22A2 2 0 0 1 24 11.6V20.9A2 2 0 0 1 22 22.9H8A2 2 0 0 1 6 20.9V9A2 2 0 0 1 8 7Z"/><path d="M15.05 13.6V19.8M11.9 16.7H18.2"/></svg>
<svg class="a" style="left:2358px;top:911.9000000000001px;" width="24" height="24" viewBox="0 0 24 24" fill="none" stroke="#7f97aa" stroke-width="1.9" stroke-linecap="round" stroke-linejoin="round"><path d="M8.2 17.7H7.4A1.8 1.8 0 0 1 5.6 15.9V7.9A1.8 1.8 0 0 1 7.4 6.1H15.2A1.8 1.8 0 0 1 17 7.9V8.8"/><path d="M14.1 12.3H21.1A2 2 0 0 1 23.1 14.3V21.8A2 2 0 0 1 21.1 23.8H14.1A2 2 0 0 1 12.1 21.8V14.3A2 2 0 0 1 14.1 12.3Z"/></svg>
<svg class="a" style="left:2392px;top:911.9000000000001px;" width="24" height="24" viewBox="0 0 24 24" fill="none" stroke="#7f97aa" stroke-width="1.9" stroke-linecap="round" stroke-linejoin="round"><path d="M4.25 9.6H19.45M8.2 9.6V7.6A1.4 1.4 0 0 1 9.6 6.2H13.8A1.4 1.4 0 0 1 15.2 7.6V9.6M5.5 9.6V21.5A2.4 2.4 0 0 0 7.9 23.9H15.65A2.4 2.4 0 0 0 18.05 21.5V9.6M9.9 13.9V19.8M13.5 13.9V19.8"/></svg>
<svg class="a" style="left:1290px;top:960.6500000000001px;" width="10" height="7" viewBox="0 0 10 7" fill="none" stroke="#7790a4" stroke-width="1.3" stroke-linecap="round" stroke-linejoin="round"><path d="M0.85 5.4L4.8 1.2L8.75 5.4"/></svg>
<svg class="a" style="left:1306.0px;top:957.4px" width="14" height="12" viewBox="0 0 14 12" fill="#54728a" stroke="none"><rect x="0.0" y="0.0" width="1.8" height="1.8"/><rect x="0.0" y="4.5" width="1.8" height="1.8"/><rect x="0.0" y="9.0" width="1.8" height="1.8"/><rect x="3.6" y="0.0" width="1.8" height="1.8"/><rect x="3.6" y="4.5" width="1.8" height="1.8"/><rect x="3.6" y="9.0" width="1.8" height="1.8"/><rect x="7.2" y="0.0" width="1.8" height="1.8"/><rect x="7.2" y="4.5" width="1.8" height="1.8"/><rect x="7.2" y="9.0" width="1.8" height="1.8"/><rect x="10.8" y="0.0" width="1.8" height="1.8"/><rect x="10.8" y="4.5" width="1.8" height="1.8"/><rect x="10.8" y="9.0" width="1.8" height="1.8"/></svg>
<svg class="a" style="left:1324.5px;top:950.5500000000001px;" width="21" height="21" viewBox="0 0 24 24" fill="none" stroke="#6f8aa0" stroke-width="1.8" stroke-linecap="round" stroke-linejoin="round"><path d="M8 7H11.8L13.9 9.6H22A2 2 0 0 1 24 11.6V20.9A2 2 0 0 1 22 22.9H8A2 2 0 0 1 6 20.9V9A2 2 0 0 1 8 7Z"/></svg>
<div class="a" style="left:1353px;top:948.1px;width:182.8px;height:30.2px;background:#01223b;border:1px solid #425d72;box-sizing:border-box;border-radius:8px;"></div>
<div class="a t" id="t83" style="left:1362.50px;top:956.92px;font-size:12.5px;line-height:12.5px;color:#eef1f3;transform:scaleX(1.0349);transform-origin:0 0;">Group One</div>
<svg class="a" style="left:2326px;top:947.95px;" width="24" height="24" viewBox="0 0 24 24" fill="none" stroke="#46627a" stroke-width="1.9" stroke-linecap="round" stroke-linejoin="round"><path d="M8 7H11.8L13.9 9.6H22A2 2 0 0 1 24 11.6V20.9A2 2 0 0 1 22 22.9H8A2 2 0 0 1 6 20.9V9A2 2 0 0 1 8 7Z"/><path d="M15.05 13.6V19.8M11.9 16.7H18.2"/></svg>
<svg class="a" style="left:2358px;top:947.8500000000001px;" width="24" height="24" viewBox="0 0 24 24" fill="none" stroke="#46627a" stroke-width="1.9" stroke-linecap="round" stroke-linejoin="round"><path d="M8.2 17.7H7.4A1.8 1.8 0 0 1 5.6 15.9V7.9A1.8 1.8 0 0 1 7.4 6.1H15.2A1.8 1.8 0 0 1 17 7.9V8.8"/><path d="M14.1 12.3H21.1A2 2 0 0 1 23.1 14.3V21.8A2 2 0 0 1 21.1 23.8H14.1A2 2 0 0 1 12.1 21.8V14.3A2 2 0 0 1 14.1 12.3Z"/></svg>
<svg class="a" style="left:2392px;top:947.8500000000001px;" width="24" height="24" viewBox="0 0 24 24" fill="none" stroke="#7f97aa" stroke-width="1.9" stroke-linecap="round" stroke-linejoin="round"><path d="M4.25 9.6H19.45M8.2 9.6V7.6A1.4 1.4 0 0 1 9.6 6.2H13.8A1.4 1.4 0 0 1 15.2 7.6V9.6M5.5 9.6V21.5A2.4 2.4 0 0 0 7.9 23.9H15.65A2.4 2.4 0 0 0 18.05 21.5V9.6M9.9 13.9V19.8M13.5 13.9V19.8"/></svg>
<svg class="a" style="left:1348.6px;top:993.4px" width="14" height="12" viewBox="0 0 14 12" fill="#54728a" stroke="none"><rect x="0.0" y="0.0" width="1.8" height="1.8"/><rect x="0.0" y="4.5" width="1.8" height="1.8"/><rect x="0.0" y="9.0" width="1.8" height="1.8"/><rect x="3.6" y="0.0" width="1.8" height="1.8"/><rect x="3.6" y="4.5" width="1.8" height="1.8"/><rect x="3.6" y="9.0" width="1.8" height="1.8"/><rect x="7.2" y="0.0" width="1.8" height="1.8"/><rect x="7.2" y="4.5" width="1.8" height="1.8"/><rect x="7.2" y="9.0" width="1.8" height="1.8"/><rect x="10.8" y="0.0" width="1.8" height="1.8"/><rect x="10.8" y="4.5" width="1.8" height="1.8"/><rect x="10.8" y="9.0" width="1.8" height="1.8"/></svg>
<div class="a" style="left:1370.3px;top:984.2px;width:180px;height:30.2px;background:#01223b;border:1px solid #425d72;box-sizing:border-box;border-radius:8px;"></div>
<div class="a t" id="t84" style="left:1379.80px;top:993.02px;font-size:12.5px;line-height:12.5px;color:#eef1f3;transform:scaleX(0.9425);transform-origin:0 0;">ATTR_1</div>
<div class="a" style="left:1601.3px;top:984.2px;width:181.4px;height:30.2px;background:#01223b;border:1px solid #425d72;box-sizing:border-box;border-radius:8px;"></div>
<div class="a t" id="t85" style="left:1610.80px;top:993.02px;font-size:12.5px;line-height:12.5px;color:#eef1f3;transform:scaleX(1.0529);transform-origin:0 0;">Attribute 1</div>
<div class="a" style="left:1833.2px;top:984.2px;width:182.4px;height:30.2px;background:#01223b;border:1px solid #425d72;box-sizing:border-box;border-radius:8px;"></div>
<div class="a" style="left:2065.5px;top:984.2px;width:209.1px;height:30.2px;background:#01223b;border:1px solid #425d72;box-sizing:border-box;border-radius:8px;"></div>
<div class="a t" id="t86" style="left:2075.00px;top:993.02px;font-size:12.5px;line-height:12.5px;color:#eef1f3;transform:scaleX(0.9646);transform-origin:0 0;">Value 1</div>
<svg class="a" style="left:2245px;top:990.8000000000001px;" width="16" height="16" viewBox="0 0 24 24" fill="none" stroke="#e5453d" stroke-width="2.1" stroke-linecap="round" stroke-linejoin="round"><path d="M12 9V13M12 17H12.01"/><path d="M10.24 3.957L2.518 16.85A1.989 1.989 0 0 0 4.22 19.83H19.76A1.989 1.989 0 0 0 21.46 16.85L13.74 3.957A1.989 1.989 0 0 0 10.24 3.957Z"/></svg>
<svg class="a" style="left:2326px;top:984.0px;" width="24" height="24" viewBox="0 0 24 24" fill="none" stroke="#7f97aa" stroke-width="1.9" stroke-linecap="round" stroke-linejoin="round"><path d="M8 7H11.8L13.9 9.6H22A2 2 0 0 1 24 11.6V20.9A2 2 0 0 1 22 22.9H8A2 2 0 0 1 6 20.9V9A2 2 0 0 1 8 7Z"/><path d="M11.9 16.7H18.2"/></svg>
<svg class="a" style="left:2358px;top:983.9000000000001px;" width="24" height="24" viewBox="0 0 24 24" fill="none" stroke="#7f97aa" stroke-width="1.9" stroke-linecap="round" stroke-linejoin="round"><path d="M8.2 17.7H7.4A1.8 1.8 0 0 1 5.6 15.9V7.9A1.8 1.8 0 0 1 7.4 6.1H15.2A1.8 1.8 0 0 1 17 7.9V8.8"/><path d="M14.1 12.3H21.1A2 2 0 0 1 23.1 14.3V21.8A2 2 0 0 1 21.1 23.8H14.1A2 2 0 0 1 12.1 21.8V14.3A2 2 0 0 1 14.1 12.3Z"/></svg>
<svg class="a" style="left:2392px;top:983.9000000000001px;" width="24" height="24" viewBox="0 0 24 24" fill="none" stroke="#7f97aa" stroke-width="1.9" stroke-linecap="round" stroke-linejoin="round"><path d="M4.25 9.6H19.45M8.2 9.6V7.6A1.4 1.4 0 0 1 9.6 6.2H13.8A1.4 1.4 0 0 1 15.2 7.6V9.6M5.5 9.6V21.5A2.4 2.4 0 0 0 7.9 23.9H15.65A2.4 2.4 0 0 0 18.05 21.5V9.6M9.9 13.9V19.8M13.5 13.9V19.8"/></svg>
<svg class="a" style="left:1290px;top:1032.65px;" width="10" height="7" viewBox="0 0 10 7" fill="none" stroke="#7790a4" stroke-width="1.3" stroke-linecap="round" stroke-linejoin="round"><path d="M0.85 5.4L4.8 1.2L8.75 5.4"/></svg>
<svg class="a" style="left:1306.0px;top:1029.4px" width="14" height="12" viewBox="0 0 14 12" fill="#54728a" stroke="none"><rect x="0.0" y="0.0" width="1.8" height="1.8"/><rect x="0.0" y="4.5" width="1.8" height="1.8"/><rect x="0.0" y="9.0" width="1.8" height="1.8"/><rect x="3.6" y="0.0" width="1.8" height="1.8"/><rect x="3.6" y="4.5" width="1.8" height="1.8"/><rect x="3.6" y="9.0" width="1.8" height="1.8"/><rect x="7.2" y="0.0" width="1.8" height="1.8"/><rect x="7.2" y="4.5" width="1.8" height="1.8"/><rect x="7.2" y="9.0" width="1.8" height="1.8"/><rect x="10.8" y="0.0" width="1.8" height="1.8"/><rect x="10.8" y="4.5" width="1.8" height="1.8"/><rect x="10.8" y="9.0" width="1.8" height="1.8"/></svg>
<svg class="a" style="left:1324.5px;top:1022.5500000000001px;" width="21" height="21" viewBox="0 0 24 24" fill="none" stroke="#6f8aa0" stroke-width="1.8" stroke-linecap="round" stroke-linejoin="round"><path d="M8 7H11.8L13.9 9.6H22A2 2 0 0 1 24 11.6V20.9A2 2 0 0 1 22 22.9H8A2 2 0 0 1 6 20.9V9A2 2 0 0 1 8 7Z"/></svg>
<div class="a" style="left:1353px;top:1020.2px;width:182.8px;height:30.2px;background:#01223b;border:1px solid #425d72;box-sizing:border-box;border-radius:8px;"></div>
<div class="a t" id="t87" style="left:1362.50px;top:1029.02px;font-size:12.5px;line-height:12.5px;color:#eef1f3;transform:scaleX(1.0341);transform-origin:0 0;">Group Two</div>
<svg class="a" style="left:2326px;top:1019.95px;" width="24" height="24" viewBox="0 0 24 24" fill="none" stroke="#46627a" stroke-width="1.9" stroke-linecap="round" stroke-linejoin="round"><path d="M8 7H11.8L13.9 9.6H22A2 2 0 0 1 24 11.6V20.9A2 2 0 0 1 22 22.9H8A2 2 0 0 1 6 20.9V9A2 2 0 0 1 8 7Z"/><path d="M15.05 13.6V19.8M11.9 16.7H18.2"/></svg>
<svg class="a" style="left:2358px;top:1019.8500000000001px;" width="24" height="24" viewBox="0 0 24 24" fill="none" stroke="#46627a" stroke-width="1.9" stroke-linecap="round" stroke-linejoin="round"><path d="M8.2 17.7H7.4A1.8 1.8 0 0 1 5.6 15.9V7.9A1.8 1.8 0 0 1 7.4 6.1H15.2A1.8 1.8 0 0 1 17 7.9V8.8"/><path d="M14.1 12.3H21.1A2 2 0 0 1 23.1 14.3V21.8A2 2 0 0 1 21.1 23.8H14.1A2 2 0 0 1 12.1 21.8V14.3A2 2 0 0 1 14.1 12.3Z"/></svg>
<svg class="a" style="left:2392px;top:1019.8500000000001px;" width="24" height="24" viewBox="0 0 24 24" fill="none" stroke="#7f97aa" stroke-width="1.9" stroke-linecap="round" stroke-linejoin="round"><path d="M4.25 9.6H19.45M8.2 9.6V7.6A1.4 1.4 0 0 1 9.6 6.2H13.8A1.4 1.4 0 0 1 15.2 7.6V9.6M5.5 9.6V21.5A2.4 2.4 0 0 0 7.9 23.9H15.65A2.4 2.4 0 0 0 18.05 21.5V9.6M9.9 13.9V19.8M13.5 13.9V19.8"/></svg>
<svg class="a" style="left:1348.6px;top:1065.5px" width="14" height="12" viewBox="0 0 14 12" fill="#54728a" stroke="none"><rect x="0.0" y="0.0" width="1.8" height="1.8"/><rect x="0.0" y="4.5" width="1.8" height="1.8"/><rect x="0.0" y="9.0" width="1.8" height="1.8"/><rect x="3.6" y="0.0" width="1.8" height="1.8"/><rect x="3.6" y="4.5" width="1.8" height="1.8"/><rect x="3.6" y="9.0" width="1.8" height="1.8"/><rect x="7.2" y="0.0" width="1.8" height="1.8"/><rect x="7.2" y="4.5" width="1.8" height="1.8"/><rect x="7.2" y="9.0" width="1.8" height="1.8"/><rect x="10.8" y="0.0" width="1.8" height="1.8"/><rect x="10.8" y="4.5" width="1.8" height="1.8"/><rect x="10.8" y="9.0" width="1.8" height="1.8"/></svg>
<div class="a" style="left:1370.3px;top:1056.1px;width:180px;height:30.2px;background:#01223b;border:1px solid #425d72;box-sizing:border-box;border-radius:8px;"></div>
<div class="a t" id="t88" style="left:1379.80px;top:1064.92px;font-size:12.5px;line-height:12.5px;color:#eef1f3;transform:scaleX(0.9863);transform-origin:0 0;">ATTR_2</div>
<div class="a" style="left:1601.3px;top:1056.1px;width:181.4px;height:30.2px;background:#01223b;border:1px solid #425d72;box-sizing:border-box;border-radius:8px;"></div>
<div class="a t" id="t89" style="left:1610.80px;top:1064.92px;font-size:12.5px;line-height:12.5px;color:#eef1f3;transform:scaleX(1.1038);transform-origin:0 0;">Attribute 2</div>
<div class="a" style="left:1833.2px;top:1056.1px;width:182.4px;height:30.2px;background:#01223b;border:1px solid #425d72;box-sizing:border-box;border-radius:8px;"></div>
<div class="a" style="left:2065.5px;top:1056.1px;width:209.1px;height:30.2px;background:#01223b;border:1px solid #425d72;box-sizing:border-box;border-radius:8px;"></div>
<div class="a t" id="t90" style="left:2075.00px;top:1064.92px;font-size:12.5px;line-height:12.5px;color:#eef1f3;transform:scaleX(1.0128);transform-origin:0 0;">Value 2</div>
<svg class="a" style="left:2245px;top:1062.6999999999998px;" width="16" height="16" viewBox="0 0 24 24" fill="none" stroke="#e5453d" stroke-width="2.1" stroke-linecap="round" stroke-linejoin="round"><path d="M12 9V13M12 17H12.01"/><path d="M10.24 3.957L2.518 16.85A1.989 1.989 0 0 0 4.22 19.83H19.76A1.989 1.989 0 0 0 21.46 16.85L13.74 3.957A1.989 1.989 0 0 0 10.24 3.957Z"/></svg>
<svg class="a" style="left:2326px;top:1056.1px;" width="24" height="24" viewBox="0 0 24 24" fill="none" stroke="#7f97aa" stroke-width="1.9" stroke-linecap="round" stroke-linejoin="round"><path d="M8 7H11.8L13.9 9.6H22A2 2 0 0 1 24 11.6V20.9A2 2 0 0 1 22 22.9H8A2 2 0 0 1 6 20.9V9A2 2 0 0 1 8 7Z"/><path d="M11.9 16.7H18.2"/></svg>
<svg class="a" style="left:2358px;top:1056.0px;" width="24" height="24" viewBox="0 0 24 24" fill="none" stroke="#7f97aa" stroke-width="1.9" stroke-linecap="round" stroke-linejoin="round"><path d="M8.2 17.7H7.4A1.8 1.8 0 0 1 5.6 15.9V7.9A1.8 1.8 0 0 1 7.4 6.1H15.2A1.8 1.8 0 0 1 17 7.9V8.8"/><path d="M14.1 12.3H21.1A2 2 0 0 1 23.1 14.3V21.8A2 2 0 0 1 21.1 23.8H14.1A2 2 0 0 1 12.1 21.8V14.3A2 2 0 0 1 14.1 12.3Z"/></svg>
<svg class="a" style="left:2392px;top:1056.0px;" width="24" height="24" viewBox="0 0 24 24" fill="none" stroke="#7f97aa" stroke-width="1.9" stroke-linecap="round" stroke-linejoin="round"><path d="M4.25 9.6H19.45M8.2 9.6V7.6A1.4 1.4 0 0 1 9.6 6.2H13.8A1.4 1.4 0 0 1 15.2 7.6V9.6M5.5 9.6V21.5A2.4 2.4 0 0 0 7.9 23.9H15.65A2.4 2.4 0 0 0 18.05 21.5V9.6M9.9 13.9V19.8M13.5 13.9V19.8"/></svg>
<svg class="a" style="left:1302.5px;top:1100.2px;" width="15" height="15" viewBox="0 0 15 15" fill="none" stroke="#ffffff" stroke-width="1.6" stroke-linecap="round" stroke-linejoin="round"><path d="M7.5 1V14M1 7.5H14"/></svg>
<div class="a t" id="t91" style="left:1328.60px;top:1102.49px;font-size:11px;line-height:11px;color:#ffffff;font-weight:700;transform:scaleX(0.9716);transform-origin:0 0;">ADD NEW ATTRIBUTE</div>
<svg class="a" style="left:0;top:0" width="2539" height="1265" viewBox="0 0 2539 1265" fill="none" stroke="#ff0000" stroke-width="4.5" stroke-linecap="butt"><path d="M1122.6 573.6L1254 242.8"/><path d="M1130 588.6L1253.4 498.4"/><path d="M1126.4 606.7L1253.5 844.6"/></svg>
<div class="a t" id="t92" style="left:861.20px;top:577.33px;font-size:29.5px;line-height:29.5px;color:#f40000;transform:scaleX(1.0030);transform-origin:0 0;">Highlighted borders</div>
</body></html>
